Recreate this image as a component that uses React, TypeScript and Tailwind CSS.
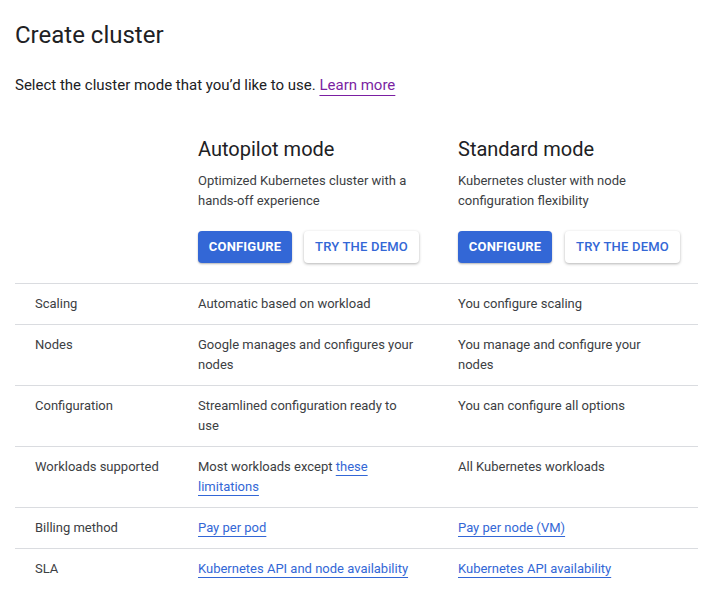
const rows = [
    {
        label: "Scaling",
        autopilot: <>Automatic based on workload</>,
        standard: <>You configure scaling</>,
    },
    {
        label: "Nodes",
        autopilot: <>Google manages and configures your nodes</>,
        standard: <>You manage and configure your nodes</>,
    },
    {
        label: "Configuration",
        autopilot: <>Streamlined configuration ready to use</>,
        standard: <>You can configure all options</>,
    },
    {
        label: "Workloads supported",
        autopilot: <>Most workloads except <Link>these limitations</Link></>,
        standard: <>All Kubernetes workloads</>,
    },
    {
        label: "Billing method",
        autopilot: <Link>Pay per pod</Link>,
        standard: <Link>Pay per node (VM)</Link>,
    },
    {
        label: "SLA",
        autopilot: <Link>Kubernetes API and node availability</Link>,
        standard: <Link>Kubernetes API availability</Link>,
    },
];

function Link({ children }: { children: React.ReactNode }) {
    return (
        <a href="#" className="text-[#3367d6] underline decoration-[#3367d6] underline-offset-[4px]">
            {children}
        </a>
    );
}

function ModeHeader({ title, desc, gap }: { title: string; desc: string; gap: string }) {
    return (
        <div className="flex flex-col">
            <h2 className="text-[20px] leading-[28px] text-[#202124]">{title}</h2>
            <p className="mt-[8px] max-w-[220px] text-[13px] leading-[20px] text-[#3c4043]">{desc}</p>
            <div className={"mt-[20px] flex flex-row " + gap}>
                <button className="h-8 w-[94px] shrink-0 rounded-[4px] bg-[#3367d6] text-[13px] font-bold tracking-[0.2px] text-white shadow-[0_1px_2px_rgba(0,0,0,0.3)]">
                    CONFIGURE
                </button>
                <button className="h-8 w-[115px] shrink-0 rounded-[4px] bg-white text-[13px] font-medium tracking-[0.2px] text-[#3367d6] shadow-[0_1px_3px_rgba(0,0,0,0.3)]">
                    TRY THE DEMO
                </button>
            </div>
        </div>
    );
}

export default function App() {
    return (
        <div className="w-[711px] h-[602px] bg-white pl-[15px] pr-[13px] pt-[19px] font-['Roboto',sans-serif] text-[#3c4043]">
            <h1 className="text-[24px] leading-[32px] text-[#202124]">Create cluster</h1>
            <p className="mt-[24px] text-[15px] leading-[20px] text-[#202124]">
                Select the cluster mode that you’d like to use.{" "}
                <a href="#" className="text-[#7b1fa2] underline decoration-[#7b1fa2] underline-offset-[5px]">Learn more</a>
            </p>

            <div className="mt-[40px] grid grid-cols-[183px_260px_240px]">
                <div />
                <ModeHeader title="Autopilot mode" desc="Optimized Kubernetes cluster with a hands-off experience" gap="gap-3" />
                <ModeHeader title="Standard mode" desc="Kubernetes cluster with node configuration flexibility" gap="gap-[13px]" />
            </div>

            <div className="mt-[20px] flex flex-col">
                {rows.map((row, index) => (
                    <div
                        key={index}
                        className="grid grid-cols-[183px_260px_240px] py-[10px] text-[13px] leading-[20px] border-t border-[#dadce0]"
                    >
                        <div className="pl-5">{row.label}</div>
                        <div className="pr-10">{row.autopilot}</div>
                        <div className="pr-10">{row.standard}</div>
                    </div>
                ))}
            </div>
        </div>
    );
}
